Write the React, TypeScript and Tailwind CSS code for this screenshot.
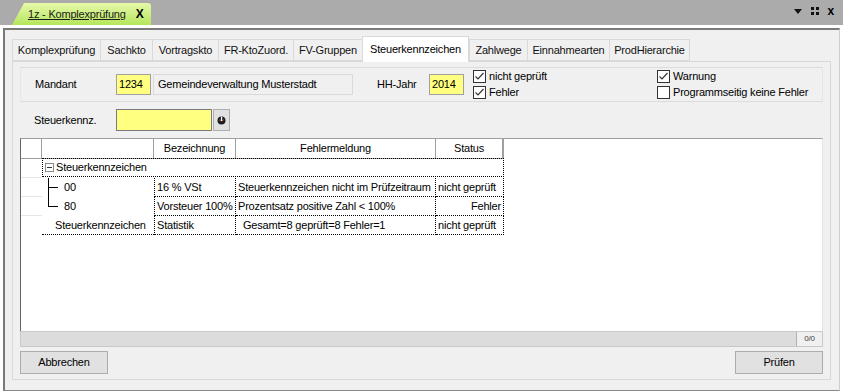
import React from 'react';

const font = { fontFamily: '"Liberation Sans", Arial, sans-serif' };

const tabs = [
  { label: 'Komplexprüfung', w: 'w-[88px]' },
  { label: 'Sachkto', w: 'w-[52px]' },
  { label: 'Vortragskto', w: 'w-[66px]' },
  { label: 'FR-KtoZuord.', w: 'w-[75px]' },
  { label: 'FV-Gruppen', w: 'w-[69px]' },
  { label: 'Steuerkennzeichen', w: 'w-[107px]', active: true },
  { label: 'Zahlwege', w: 'w-[58px]' },
  { label: 'Einnahmearten', w: 'w-[82px]' },
  { label: 'ProdHierarchie', w: 'w-[80px]' },
];

function Check({ checked, label }: { checked: boolean; label: string }) {
  return (
    <div className="flex items-center gap-[3px] h-[16px]">
      <div className="w-[13px] h-[13px] border border-[#333] bg-white flex items-center justify-center">
        {checked && (
          <svg width="11" height="11" viewBox="0 0 11 11">
            <polyline points="1.5,5.5 4,8 9.5,2" fill="none" stroke="#333" strokeWidth="1.2" />
          </svg>
        )}
      </div>
      <span className="text-black">{label}</span>
    </div>
  );
}

function Cell({ w, children, align = 'left', className = '' }: { w: string; children?: React.ReactNode; align?: 'left' | 'right'; className?: string }) {
  return (
    <div
      className={`${w} h-full flex items-center px-[2px] border-r border-b border-dotted border-black whitespace-nowrap overflow-hidden ${
        align === 'right' ? 'justify-end' : ''
      } ${className}`}
    >
      {children}
    </div>
  );
}

export default function App() {
  return (
    <div className="w-[843px] h-[392px] bg-[#ababab] flex flex-col text-[11px] tracking-[-0.2px] text-black overflow-hidden" style={font}>
      {/* Document tab strip */}
      <div className="h-[25px] flex items-end justify-between shrink-0">
        <div className="ml-[12px] w-[139px] h-[22px] rounded-tr-[3px] bg-gradient-to-b from-[#e6f8a8] to-[#b4e65a] [clip-path:polygon(12px_0,100%_0,100%_100%,0_100%)] flex items-center pl-[16px] gap-[10px]">
          <span className="underline text-[#1b1b1b]">1z - Komplexprüfung</span>
          <span className="font-bold text-[12px] leading-none">X</span>
        </div>
        <div className="flex items-center gap-[9px] mr-[9px] mb-[8px]">
          <svg width="8" height="5" viewBox="0 0 8 5"><polygon points="0,0 8,0 4,5" fill="#111" /></svg>
          <svg width="8" height="8" viewBox="0 0 8 8">
            <rect x="0" y="0" width="3" height="3" fill="#111" />
            <rect x="5" y="0" width="3" height="3" fill="#111" />
            <rect x="0" y="5" width="3" height="3" fill="#111" />
            <rect x="5" y="5" width="3" height="3" fill="#111" />
          </svg>
          <span className="font-bold text-[12px] leading-none">x</span>
        </div>
      </div>

      {/* Window */}
      <div className="flex-1 bg-white pt-[3px] px-[3px] pb-[1px] flex flex-col min-h-0">
        <div className="flex-1 border-t-2 border-l-2 border-[#7a7a7a] border-r border-r-[#cfcfcf] border-b border-b-[#888] bg-[#f0f0f0] flex flex-col pl-[7px] pr-[8px] pt-[5px] pb-[10px] min-h-0">
          {/* Tabs */}
          <div className="flex items-end h-[26px] shrink-0">
            {tabs.map((t) =>
              t.active ? (
                <div key={t.label} className={`${t.w} h-[26px] bg-white border border-b-0 border-[#d9d9d9] flex items-center justify-center -mb-[1px] relative z-10`}>
                  {t.label}
                </div>
              ) : (
                <div key={t.label} className={`${t.w} h-[22px] bg-[#f0f0f0] border border-r-0 border-[#d9d9d9] flex items-center justify-center text-[#111]`}>
                  {t.label}
                </div>
              )
            )}
            <div className="w-0 h-[22px] border-r border-[#d9d9d9]" />
          </div>

          {/* Tab page */}
          <div className="flex-1 border border-[#d9d9d9] bg-[#f0f0f0] px-[7px] pt-[5px] pb-[5px] flex flex-col min-h-0">
            {/* Filter group */}
            <div className="h-[35px] border-y border-[#dcdcdc] border-x border-x-[#e6e6e6] flex items-center shrink-0">
              <span className="w-[95px] pl-[14px]">Mandant</span>
              <div className="w-[35px] h-[21px] bg-[#ffff80] border border-[#a0a0a0] flex items-center pl-[2px]">1234</div>
              <div className="w-[200px] h-[21px] ml-[2px] border border-[#dadada] bg-[#f0f0f0] flex items-center pl-[4px]">Gemeindeverwaltung Musterstadt</div>
              <span className="ml-[24px] w-[52px]">HH-Jahr</span>
              <div className="w-[35px] h-[21px] bg-[#ffff80] border border-[#a0a0a0] flex items-center pl-[2px]">2014</div>
              <div className="ml-[9px] w-[184px] flex flex-col">
                <Check checked label="nicht geprüft" />
                <Check checked label="Fehler" />
              </div>
              <div className="flex flex-col">
                <Check checked label="Warnung" />
                <Check checked={false} label="Programmseitig keine Fehler" />
              </div>
            </div>

            {/* Steuerkennz */}
            <div className="flex items-center mt-[7px] h-[22px] shrink-0">
              <span className="w-[96px] pl-[14px]">Steuerkennz.</span>
              <div className="w-[96px] h-[22px] bg-[#ffff80] border border-[#7a7a7a]" />
              <div className="w-[17px] h-[22px] ml-[1px] bg-[#e1e1e1] border border-[#adadad] flex items-center justify-center">
                <svg width="9" height="9" viewBox="0 0 9 9">
                  <circle cx="4.5" cy="4.5" r="4" fill="#1c1c28" />
                  <path d="M2 3.5 A3 3 0 0 0 7 3.5" fill="none" stroke="#c26a1a" strokeWidth="0.8" />
                  <rect x="3.9" y="0.8" width="1.3" height="4.2" fill="#fff" />
                </svg>
              </div>
            </div>

            {/* Grid */}
            <div className="mt-[7px] flex-1 bg-white border-t border-l border-t-[#a0a0a0] border-l-[#646464] border-r border-r-[#e3e3e3] flex flex-col min-h-0">
              {/* Header */}
              <div className="flex h-[20px] shrink-0">
                <div className="w-[21px] border-r border-b border-[#a0a0a0]" />
                <div className="w-[112px] border-r border-b border-[#a0a0a0]" />
                <div className="w-[82px] border-r border-b border-[#a0a0a0] flex items-center justify-center">Bezeichnung</div>
                <div className="w-[200px] border-r border-b border-[#a0a0a0] flex items-center justify-center">Fehlermeldung</div>
                <div className="w-[68px] border-r-2 border-b border-[#a0a0a0] flex items-center justify-center">Status</div>
              </div>

              {/* Group row */}
              <div className="flex h-[19px] shrink-0">
                <div className="w-[21px] border-b border-[#e6e6e6]" />
                <div className="w-[462px] h-full flex items-center border border-dotted border-black -mt-[1px] relative">
                  <div className="ml-[2px] w-[9px] h-[9px] border border-[#888] flex items-center justify-center bg-white">
                    <div className="w-[5px] h-[1px] bg-[#333]" />
                  </div>
                  <span className="ml-[2px]">Steuerkennzeichen</span>
                </div>
              </div>

              {/* Child rows */}
              {[
                { code: '00', bez: '16 % VSt', msg: 'Steuerkennzeichen nicht im Prüfzeitraum', status: 'nicht geprüft', right: false, last: false },
                { code: '80', bez: 'Vorsteuer 100%', msg: 'Prozentsatz positive Zahl < 100%', status: 'Fehler', right: true, last: true },
              ].map((r) => (
                <div key={r.code} className="flex h-[19px] shrink-0">
                  <div className="w-[21px] border-b border-[#e6e6e6]" />
                  <div className="w-[112px] h-full relative flex items-center pl-[22px]">
                    <div className={`absolute left-[6px] top-0 w-[1px] bg-black ${r.last ? 'h-[10px]' : 'h-full'}`} />
                    <div className="absolute left-[6px] top-[9px] w-[10px] h-[1px] bg-black" />
                    {r.code}
                  </div>
                  <Cell w="w-[82px]" className="border-l">{r.bez}</Cell>
                  <Cell w="w-[200px]">{r.msg}</Cell>
                  <Cell w="w-[68px]" align={r.right ? 'right' : 'left'}>{r.status}</Cell>
                </div>
              ))}

              {/* Statistik row */}
              <div className="flex h-[19px] shrink-0">
                <div className="w-[21px]" />
                <div className="w-[112px] h-full flex items-center pl-[13px] border-b border-dotted border-black whitespace-nowrap">Steuerkennzeichen</div>
                <Cell w="w-[82px]" className="border-l">Statistik</Cell>
                <Cell w="w-[200px]" className="pl-[7px]">Gesamt=8 geprüft=8 Fehler=1</Cell>
                <Cell w="w-[68px]">nicht geprüft</Cell>
              </div>
              <div className="flex-1" />
            </div>

            {/* Status bar */}
            <div className="h-[16px] bg-[#dcdcdc] border border-[#c8c8c8] flex justify-end shrink-0">
              <div className="w-[26px] h-full bg-[#f0f0f0] border-l border-[#b0b0b0] flex items-center justify-center text-[8px] text-[#444]">0/0</div>
            </div>

            {/* Buttons */}
            <div className="flex justify-between mt-[4px] shrink-0">
              <button className="w-[88px] h-[23px] bg-[#e1e1e1] border border-[#adadad] flex items-center justify-center">Abbrechen</button>
              <button className="w-[88px] h-[23px] bg-[#e1e1e1] border border-[#adadad] flex items-center justify-center">Prüfen</button>
            </div>
          </div>
        </div>
      </div>
    </div>
  );
}
